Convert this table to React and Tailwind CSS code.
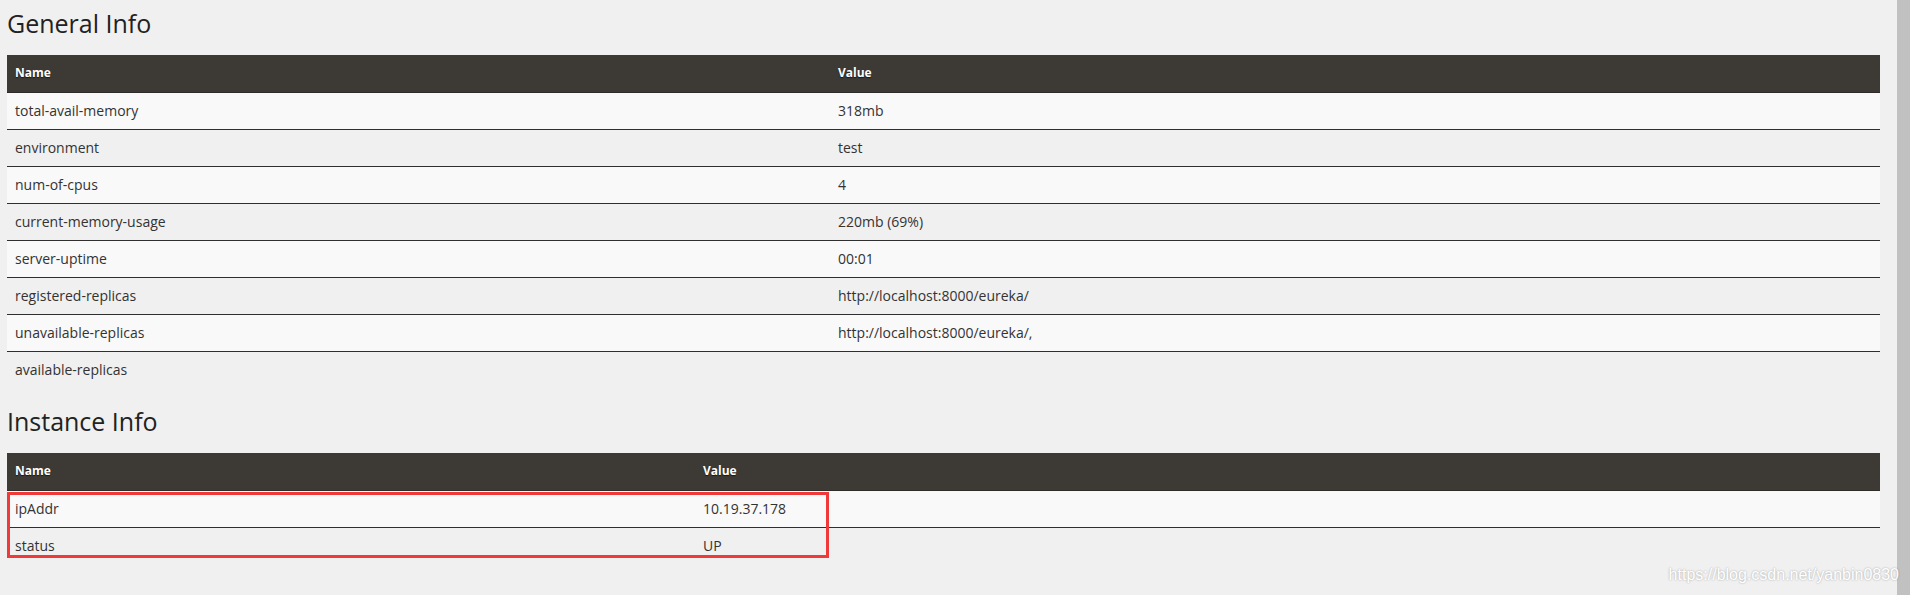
import React from 'react';

const generalInfo = [
  ['total-avail-memory', '318mb'],
  ['environment', 'test'],
  ['num-of-cpus', '4'],
  ['current-memory-usage', '220mb (69%)'],
  ['server-uptime', '00:01'],
  ['registered-replicas', 'http://localhost:8000/eureka/'],
  ['unavailable-replicas', 'http://localhost:8000/eureka/,'],
  ['available-replicas', ''],
];

const instanceInfo = [
  ['ipAddr', '10.19.37.178'],
  ['status', 'UP'],
];

function InfoTable({ rows, nameWidth }) {
  return (
    <div className="w-full text-[14px] text-[#333]">
      {/* Header */}
      <div className="flex h-[38px] items-center pb-[2px] bg-[#3d3934] border-b border-[#2e2b28] text-[12px] font-bold text-white [text-shadow:0_1px_1px_rgba(0,0,0,0.6)]">
        <div className={`${nameWidth} shrink-0 px-2`}>Name</div>
        <div className="flex-1 px-2">Value</div>
      </div>
      {rows.map(([name, value], i) => (
        <div
          key={name}
          className={`flex h-[37px] items-center pb-[2px] ${i % 2 === 0 ? 'bg-[#f9f9f9]' : 'bg-[#f0f0f0]'} ${i < rows.length - 1 ? 'border-b border-[#2f2f2f]' : ''}`}
        >
          <div className={`${nameWidth} shrink-0 px-2`}>{name}</div>
          <div className="flex-1 px-2">{value}</div>
        </div>
      ))}
    </div>
  );
}

export default function App() {
  return (
    <div className="relative flex h-[595px] overflow-hidden bg-[#f0f0f0] font-['Open_Sans','Noto_Sans',sans-serif]">
      <div className="flex-1 pl-[7px] pr-[17px]">
        {/* General Info */}
        <h2 className="pt-[8px] mb-[17px] text-[25px] font-medium leading-[30px] text-[#222]">General Info</h2>
        <InfoTable rows={generalInfo} nameWidth="w-[823px]" />

        {/* Instance Info */}
        <h2 className="pt-[17px] mb-[17px] text-[25px] font-medium leading-[30px] text-[#222]">Instance Info</h2>
        <div className="relative">
          <InfoTable rows={instanceInfo} nameWidth="w-[688px]" />
          {/* highlight box */}
          <div className="absolute left-0 top-[39px] h-[66px] w-[822px] border-[3px] border-[#f03a3a]"></div>
        </div>
      </div>

      {/* scrollbar */}
      <div className="w-[13px] shrink-0 bg-[#c1c1c1]"></div>

      {/* watermark */}
      <div className="absolute right-[11px] bottom-[11px] font-['Liberation_Sans',Arial,sans-serif] text-[16px] leading-[18px] text-white [text-shadow:0_0_2px_rgba(0,0,0,0.35)]">
        https://blog.csdn.net/yanbin0830
      </div>
    </div>
  );
}
